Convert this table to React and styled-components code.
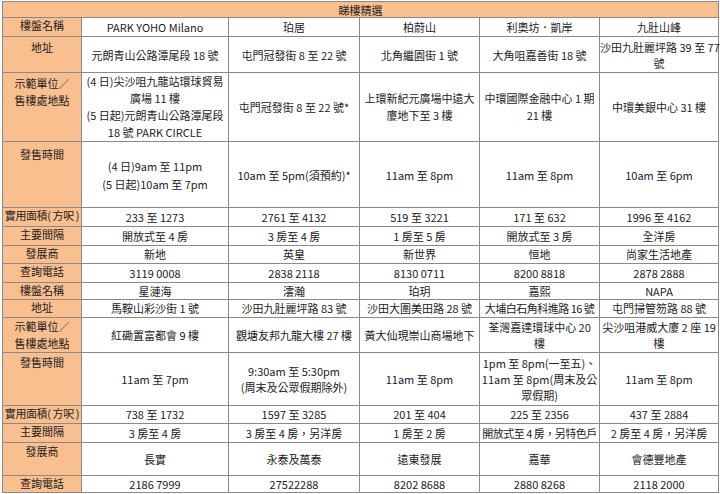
import React from 'react';
import styled, { createGlobalStyle } from 'styled-components';

const GlobalStyle = createGlobalStyle`
  body {
    margin: 0;
    background: #fff;
    font-family: "Noto Sans CJK TC", "Noto Sans", sans-serif;
    color: #222;
  }
`;

const Wrap = styled.div`
  padding: 1px 0 0 2px;
`;

const Table = styled.table`
  border-collapse: collapse;
  table-layout: fixed;
  width: 716px;
  font-size: 11px;
`;

const Row = styled.tr`
  height: ${(p) => p.h}px;
`;

const Title = styled.td`
  background: #f9bf8f;
  border: 1px solid #8a8a8a;
  text-align: center;
  padding: 0;
  line-height: 14px;
`;

const Label = styled.td`
  background: #f9bf8f;
  border: 1px solid #8a8a8a;
  text-align: center;
  vertical-align: top;
  padding: ${(p) => p.pad}px 0 0;
  line-height: ${(p) => p.lh}px;
  white-space: nowrap;
  letter-spacing: ${(p) => (p.tight ? '-0.4px' : '0')};
`;

const Cell = styled.td`
  border: 1px solid #8a8a8a;
  text-align: center;
  vertical-align: middle;
  padding: 0;
  line-height: ${(p) => p.lh}px;
  white-space: nowrap;
  letter-spacing: ${(p) => (p.tight ? '-0.5px' : '0')};
`;

const cols = [79, 147, 131, 120, 120, 119];

const rows = [
  { h: 19, label: '樓盤名稱', v: ['PARK YOHO Milano', '珀居', '柏蔚山', '利奧坊．凱岸', '九肚山峰'] },
  { h: 36, label: '地址', pad: 2, lh: 16, v: ['元朗青山公路潭尾段 18 號', '屯門冠發街 8 至 22 號', '北角繼園街 1 號', '大角咀嘉善街 18 號', '沙田九肚麗坪路 39 至 77\n號'] },
  { h: 69, label: '示範單位／\n售樓處地點', pad: 2, lh: 17, v: ['(4 日)尖沙咀九龍站環球貿易\n廣場 11 樓\n(5 日起)元朗青山公路潭尾段\n18 號 PARK CIRCLE', '屯門冠發街 8 至 22 號*', '上環新紀元廣場中遠大\n廈地下至 3 樓', '中環國際金融中心 1 期\n21 樓', '中環美銀中心 31 樓'] },
  { h: 66, label: '發售時間', pad: 3, lh: 18, v: ['(4 日)9am 至 11pm\n(5 日起)10am 至 7pm', '10am 至 5pm(須預約)*', '11am 至 8pm', '11am 至 8pm', '10am 至 6pm'] },
  { h: 19, label: '實用面積( 方呎 )', tight: true, v: ['233 至 1273', '2761 至 4132', '519 至 3221', '171 至 632', '1996 至 4162'] },
  { h: 19, label: '主要間隔', v: ['開放式至 4 房', '3 房至 4 房', '1 房至 5 房', '開放式至 3 房', '全洋房'] },
  { h: 18, label: '發展商', v: ['新地', '英皇', '新世界', '恒地', '尚家生活地產'] },
  { h: 19, label: '查詢電話', v: ['3119 0008', '2838 2118', '8130 0711', '8200 8818', '2878 2888'] },
  { h: 17, label: '樓盤名稱', v: ['星漣海', '澐瀚', '珀玥', '嘉熙', 'NAPA'] },
  { h: 18, label: '地址', v: ['馬鞍山彩沙街 1 號', '沙田九肚麗坪路 83 號', '沙田大圍美田路 28 號', '~大埔白石角科進路 16 號', '屯門掃管笏路 88 號'] },
  { h: 35, label: '示範單位／\n售樓處地點', pad: 0, lh: 16.5, v: ['紅磡置富都會 9 樓', '觀塘友邦九龍大樓 27  樓', '黃大仙現崇山商場地下', '荃灣嘉達環球中心 20\n樓', '尖沙咀港威大廈 2 座 19\n樓'] },
  { h: 53, label: '發售時間', pad: 1, lh: 16, v: ['11am 至 7pm', '9:30am 至 5:30pm\n(周末及公眾假期除外)', '11am 至 8pm', '1pm 至 8pm(一至五)、\n11am 至 8pm(周末及公\n眾假期)', '11am 至 8pm'] },
  { h: 18, label: '實用面積( 方呎 )', tight: true, v: ['738 至 1732', '1597 至 3285', '201 至 404', '225 至 2356', '437 至 2884'] },
  { h: 19, label: '主要間隔', v: ['3 房至 4 房', '3 房至 4 房，另洋房', '1 房至 2 房', '~開放式至 4 房，另特色戶', '2 房至 4 房，另洋房'] },
  { h: 33, label: '發展商', pad: 1, v: ['長實', '永泰及萬泰', '遠東發展', '嘉華', '會德豐地產'] },
  { h: 17, label: '查詢電話', v: ['2186 7999', '27522288', '8202 8688', '2880 8268', '2118 2000'] },
];

const Lines = ({ text }) =>
  text.split('\n').map((line, i, arr) => (
    <React.Fragment key={i}>
      {line}
      {i < arr.length - 1 && <br />}
    </React.Fragment>
  ));

const App = () => (
  <Wrap>
    <GlobalStyle />
    <Table>
      <colgroup>
        {cols.map((w, i) => (
          <col key={i} style={{ width: w }} />
        ))}
      </colgroup>
      <tbody>
        <Row h={16}>
          <Title colSpan={6}>睇樓精選</Title>
        </Row>
        {rows.map((r, i) => (
          <Row key={i} h={r.h}>
            <Label pad={r.pad || 0} lh={r.lh || 15} tight={r.tight}>
              <Lines text={r.label} />
            </Label>
            {r.v.map((val, j) => {
              const tight = val.startsWith('~');
              return (
                <Cell key={j} lh={r.lh || 15} tight={tight}>
                  <Lines text={tight ? val.slice(1) : val} />
                </Cell>
              );
            })}
          </Row>
        ))}
      </tbody>
    </Table>
  </Wrap>
);

export default App;
